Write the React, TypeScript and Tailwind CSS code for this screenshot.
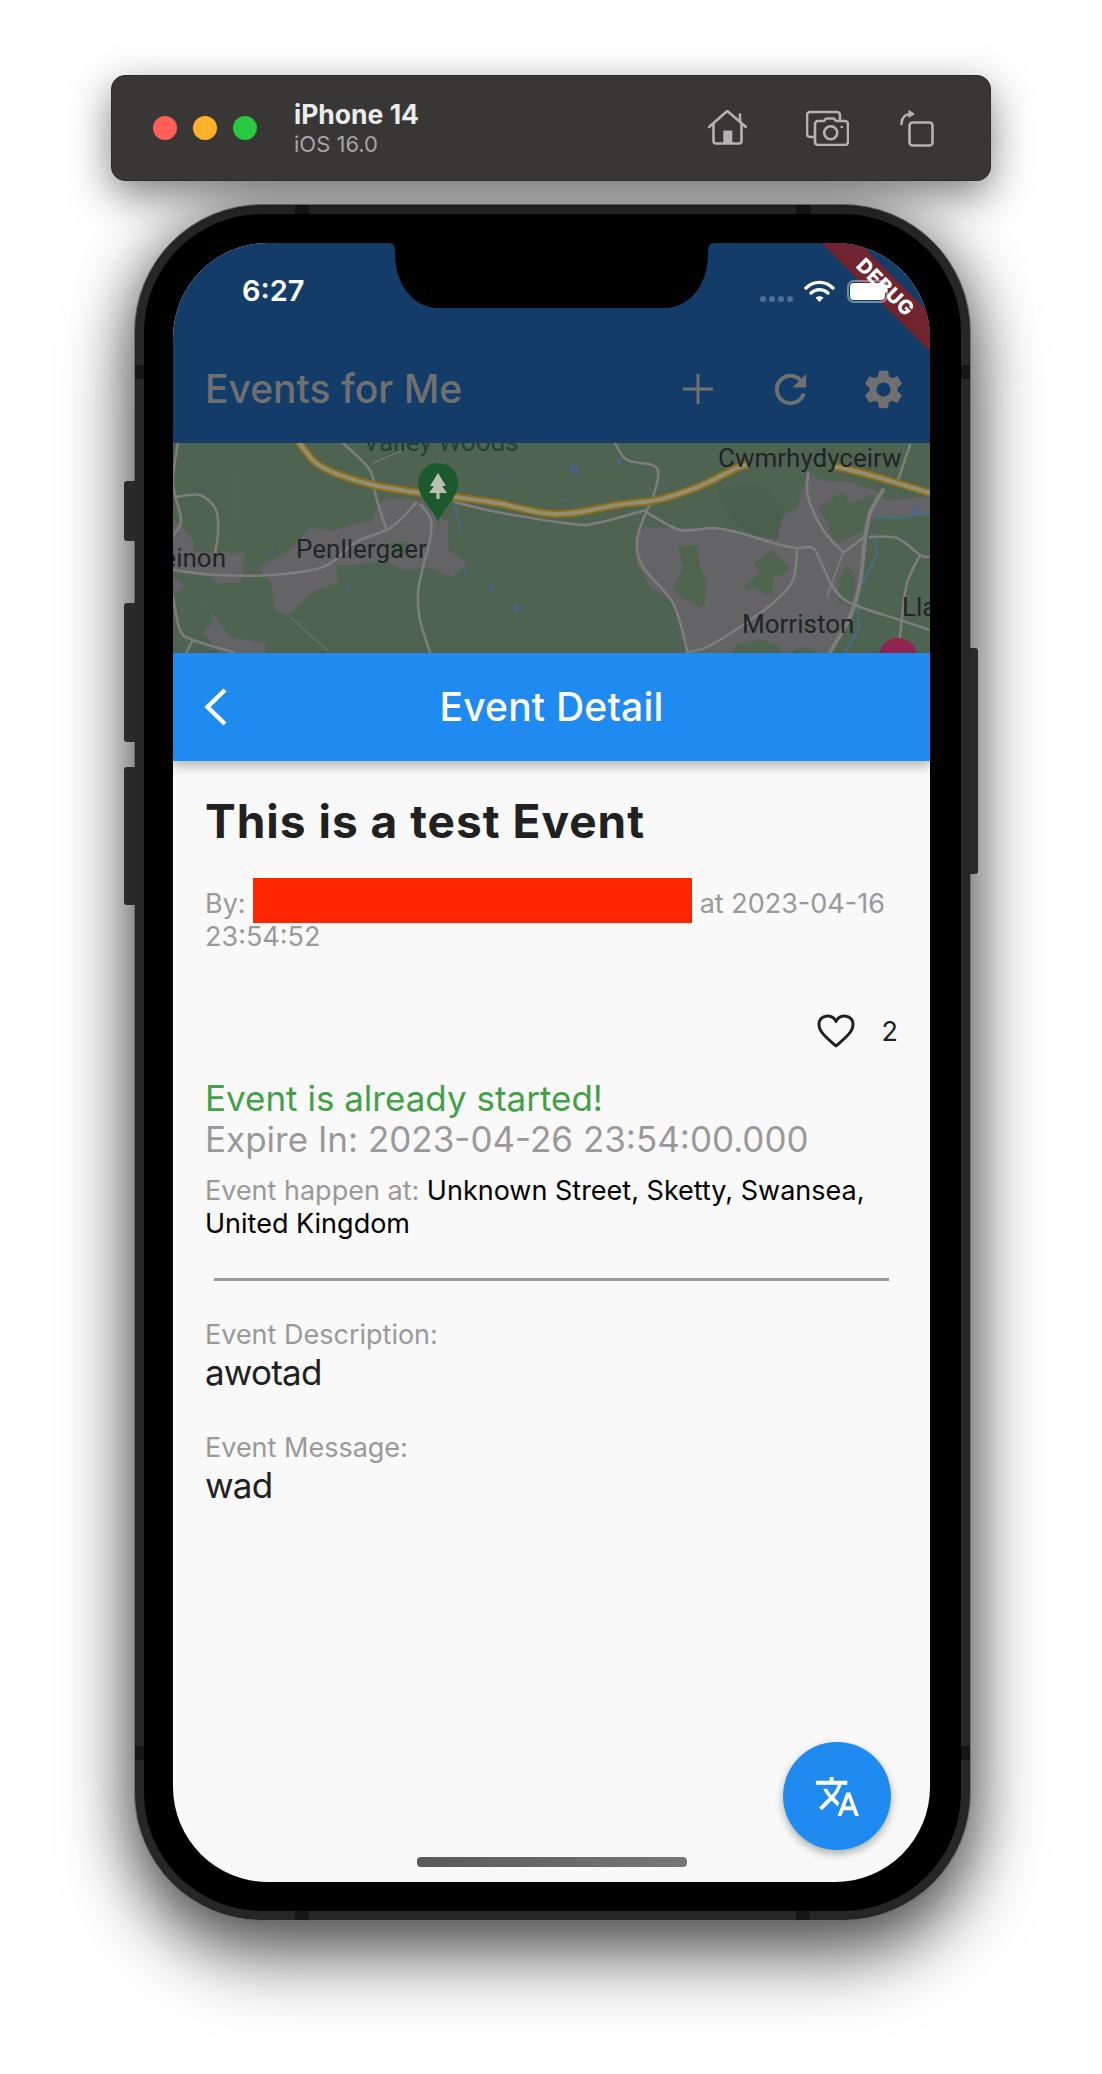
import { MdRefresh, MdSettings, MdTranslate } from "react-icons/md";

type Pt = [number, number];

// catmull-rom through the points, so map roads don't look like polylines
function smooth(pts: Pt[]) {
  let d = `M${pts[0][0]} ${pts[0][1]}`;
  for (let i = 0; i < pts.length - 1; i++) {
    const p0 = pts[Math.max(i - 1, 0)];
    const p1 = pts[i];
    const p2 = pts[i + 1];
    const p3 = pts[Math.min(i + 2, pts.length - 1)];
    const c1x = p1[0] + (p2[0] - p0[0]) / 6;
    const c1y = p1[1] + (p2[1] - p0[1]) / 6;
    const c2x = p2[0] - (p3[0] - p1[0]) / 6;
    const c2y = p2[1] - (p3[1] - p1[1]) / 6;
    d += `C${c1x} ${c1y} ${c2x} ${c2y} ${p2[0]} ${p2[1]}`;
  }
  return d;
}

const roads: Pt[][] = [
  [[170, 0], [197, 27], [203, 54], [213, 85]],
  [[0, 127], [43, 132], [97, 132], [150, 124], [183, 99], [217, 85], [243, 60]],
  [[248, 62], [258, 77], [257, 97], [250, 124], [245, 150], [247, 177], [257, 209]],
  [[3, 54], [27, 52], [43, 67], [45, 90], [42, 110]],
  [[5, 0], [0, 40], [8, 77], [0, 93]],
  [[0, 154], [7, 187], [20, 197], [60, 209]],
  [[20, 197], [13, 210]],
  [[282, 59], [324, 69], [400, 81], [424, 80], [474, 67]],
  [[442, 0], [454, 17], [484, 25], [480, 54], [475, 65]],
  [[474, 67], [464, 97], [470, 124], [500, 160], [514, 207]],
  [[473, 69], [507, 87], [540, 85], [567, 90], [600, 100], [624, 105], [640, 105], [650, 124], [660, 144], [677, 160], [727, 177], [757, 187]],
  [[624, 107], [620, 137], [600, 160], [567, 184], [534, 204], [514, 209]],
  [[635, 30], [635, 54], [650, 87], [670, 109]],
  [[670, 110], [690, 95]],
  [[697, 94], [724, 95], [747, 112], [757, 114]],
  [[747, 112], [734, 140], [729, 174], [727, 194]],
  [[724, 40], [737, 2]],
];

// the motorway drops out behind the Cwmrhydyceirw label
const motorwayWest: Pt[] = [
  [125, -2], [143, 20], [167, 32], [200, 42], [247, 50], [282, 54], [324, 60], [370, 70], [400, 70],
  [444, 62], [484, 57], [517, 47], [534, 40], [564, 25], [574, 22],
];
const motorwayEast: Pt[] = [[662, 24], [670, 25], [707, 35], [757, 50]];

function HomeIcon() {
  return (
    <svg width="39" height="36" viewBox="0 0 39 36" fill="none" stroke="#b3b3b3" strokeWidth="2.6" strokeLinecap="round" strokeLinejoin="round">
      <path d="M1 17 19.3 1 38 17" />
      <path d="M32 4.5V12" />
      <path d="M5.5 14V31a2.5 2.5 0 0 0 2.5 2.5H31a2.5 2.5 0 0 0 2.5-2.5V14" />
      <rect x="15.3" y="20.5" width="9" height="13" fill="#b3b3b3" stroke="none" />
    </svg>
  );
}

function CameraIcon() {
  return (
    <svg width="43" height="36" viewBox="0 0 43 36" fill="none" stroke="#b3b3b3" strokeWidth="2.6" strokeLinecap="round" strokeLinejoin="round">
      <path d="M8.5 27H4a3 3 0 0 1-3-3V5a3 3 0 0 1 3-3h27a3 3 0 0 1 3 3v4" />
      <path d="M12 11h6l2-2.5h8l2 2.5h9a3 3 0 0 1 3 3v18a3 3 0 0 1-3 3H12a3 3 0 0 1-3-3V14a3 3 0 0 1 3-3Z" />
      <circle cx="24.7" cy="22.7" r="6.5" />
      <circle cx="35.7" cy="17" r="1.3" fill="#b3b3b3" stroke="none" />
    </svg>
  );
}

function RotateIcon() {
  return (
    <svg width="34" height="38" viewBox="0 0 34 38" fill="none" stroke="#b3b3b3" strokeWidth="2.6" strokeLinecap="round" strokeLinejoin="round">
      <rect x="9.5" y="13.5" width="23" height="23" rx="3" />
      <path d="M1.5 15C1.5 9 5 5.5 10 5" />
      <path d="M8.5 0.8 15 5 8.5 9Z" fill="#b3b3b3" stroke="none" />
    </svg>
  );
}

function MapPicture() {
  return (
    <svg className="block h-[210px] w-[757px] font-['Roboto',sans-serif]" viewBox="0 0 757 210" fill="none">
      <rect width="757" height="210" fill="#4f6351" />

      {/* built up areas */}
      <g fill="#646466">
        <path d="M85 125 115 109 137 85 160 88 182 80 198 79 205 62 215 55 245 57 260 62 270 77 275 77 275 107 294 120 279 134 257 125 230 127 212 118 182 122 163 122 165 140 143 147 127 160 115 173 102 167 98 139Z" />
        <path d="M0 77 10 84 22 100 20 109 72 110 68 140 43 140 33 129 0 127Z" />
        <path d="M0 134 12 143 0 152Z" />
        <path d="M38 170 50 184 57 194 92 200 92 210 47 210 30 189 40 180Z" />
        <path d="M464 90 472 84 490 85 507 85 540 85 567 89 604 97 607 74 624 65 635 30 650 38 677 39 700 47 707 54 714 57 757 54 757 72 700 75 692 97 687 140 677 174 657 210 514 210 499 157 477 144 464 120Z" />
      </g>

      {/* parks on top of the built up areas */}
      <g fill="#4f654f">
        <path d="M505 104 517 102 525 104 527 125 534 137 532 159 527 164 507 154 500 144 510 125Z" />
        <path d="M599 107 617 125 612 130 600 134 600 150 592 152 582 144 572 147 570 144 587 130 580 120Z" />
        <path d="M645 65 670 49 677 60 702 52 692 87 667 100 660 97 655 80Z" />
        <path d="M665 140 674 122 682 130 682 150 677 164 665 160Z" />
        <path d="M560 210 563 202 590 197 607 203 608 210Z" />
        <path d="M617 210 625 204 640 206 642 210Z" />
        <path d="M215 100 235 98 238 108 222 112Z" />
      </g>
      <path d="M544 47 575 40 590 42 612 65 604 97 574 90 549 64Z" fill="#4a5f4c" />

      {/* water */}
      <g stroke="#4a6c8c" fill="none">
        <path d="M702 74 726 75 757 70" strokeWidth="2" />
        <path d="M700 90 705 110 692 135 684 150 686 185 672 210" strokeWidth="2" />
        <path d="M282 62 288 90" strokeWidth="3" opacity="0.6" />
        <path d="M74 10 64 30 62 75 50 110 28 170" strokeWidth="1" opacity="0.4" />
        <path d="M328 32 370 45 392 58 415 52 432 40" strokeWidth="1" opacity="0.4" />
      </g>
      <g fill="#4a6296" opacity="0.7">
        <path d="M396 22 406 23 406 30 398 31Z" />
        <path d="M444 16 448 15 449 22 444 22Z" />
        <path d="M290 126 296 125 291 135Z" />
        <path d="M315 142 322 142 316 150Z" />
        <path d="M341 162 350 162 344 170 340 170Z" />
        <path d="M97 105 100 105 100 110 97 110Z" />
        <path d="M174 143 177 143 177 148 174 148Z" />
        <path d="M740 64 748 63 745 70 739 70Z" />
      </g>

      {/* ordinary roads */}
      <g stroke="#7d7d7b" strokeWidth="2.6" strokeLinecap="round" fill="none">
        {roads.map((road, i) => (
          <path key={i} d={smooth(road)} />
        ))}
        <path d="M670 110 654 154" strokeWidth="1.6" />
        <path d={smooth([[710, 47], [697, 70], [692, 97], [687, 140], [677, 174], [657, 209]])} strokeWidth="4" />
        <path d="M117 174 155 208" strokeWidth="1" />
        <path d="M200 20 228 8" strokeWidth="1" />
      </g>

      {/* motorway */}
      <g fill="none">
        <path d={smooth(motorwayWest)} stroke="#8a6f1e" strokeWidth="8" />
        <path d={smooth(motorwayWest)} stroke="#948e70" strokeWidth="4" />
        <path d={smooth(motorwayEast)} stroke="#8a6f1e" strokeWidth="8" />
        <path d={smooth(motorwayEast)} stroke="#948e70" strokeWidth="4" />
      </g>

      {/* place names */}
      <g fill="#202427" fontSize="26">
        <text x="123" y="115">Penllergaer</text>
        <text x="53" y="124" textAnchor="end">einon</text>
        <text x="545" y="24">Cwmrhydyceirw</text>
        <text x="569" y="190">Morriston</text>
        <text x="729" y="173">Lla</text>
        <text x="190" y="8" fill="#1e4430">Valley Woods</text>
      </g>

      {/* park pin */}
      <path d="M265 79C262 68 245 56 245 40a20 20 0 0 1 40 0C285 56 268 68 265 79Z" fill="#1c5a2e" />
      <path d="M265 30 257 43 261 43 256 50 263.5 50 263.5 56 266.5 56 266.5 50 274 50 269 43 273 43Z" fill="#b7c2b4" />

      {/* second pin, cut off by the panel */}
      <circle cx="725" cy="214" r="19" fill="#8f2550" />
    </svg>
  );
}

export default function App() {
  return (
    <div className="h-[2074px] w-[1102px] overflow-hidden bg-white pt-[75px] font-['Inter',sans-serif]">
      {/* simulator toolbar */}
      <div className="relative z-10 ml-[111px] flex h-[106px] w-[880px] items-center rounded-[14px] border border-[#2b2a29] bg-[#383736] shadow-[0_14px_40px_rgba(0,0,0,0.5)]">
        <div className="ml-[41px] flex gap-[16px]">
          <span className="h-[24px] w-[24px] rounded-full bg-[#ff5f57]" />
          <span className="h-[24px] w-[24px] rounded-full bg-[#fdb22a]" />
          <span className="h-[24px] w-[24px] rounded-full bg-[#28c840]" />
        </div>
        <div className="ml-[37px] flex flex-col">
          <span className="text-[26.5px] leading-[30px] font-bold text-[#ececec]">iPhone 14</span>
          <span className="mt-[1px] text-[22px] leading-[28px] text-[#a5a5a5]">iOS 16.0</span>
        </div>
        <div className="ml-auto mr-[56px] flex items-center">
          <HomeIcon />
          <div className="ml-[59px]">
            <CameraIcon />
          </div>
          <div className="ml-[51px]">
            <RotateIcon />
          </div>
        </div>
      </div>

      {/* phone body */}
      <div className="relative ml-[134px] mt-[23px] h-[1717px] w-[837px] rounded-[128px] border border-[#6e6e6e] bg-[#262626] p-[9px] shadow-[0_38px_70px_rgba(0,0,0,0.55),0_0_60px_rgba(0,0,0,0.42)]">
        <span className="absolute left-[-11px] top-[276px] h-[60px] w-[11px] rounded-l-[3px] bg-[#2a2a2a]" />
        <span className="absolute left-[-11px] top-[398px] h-[139px] w-[11px] rounded-l-[3px] bg-[#2a2a2a]" />
        <span className="absolute left-[-11px] top-[562px] h-[138px] w-[11px] rounded-l-[3px] bg-[#2a2a2a]" />
        <span className="absolute right-[-8px] top-[443px] h-[226px] w-[8px] rounded-r-[3px] bg-[#2a2a2a]" />

        {/* antenna bands */}
        <span className="absolute left-[160px] top-0 h-[10px] w-[14px] bg-[#161616]" />
        <span className="absolute right-[160px] top-0 h-[10px] w-[14px] bg-[#161616]" />
        <span className="absolute bottom-0 left-[160px] h-[10px] w-[14px] bg-[#161616]" />
        <span className="absolute bottom-0 right-[160px] h-[10px] w-[14px] bg-[#161616]" />
        <span className="absolute left-0 top-[160px] h-[14px] w-[10px] bg-[#161616]" />
        <span className="absolute right-0 top-[160px] h-[14px] w-[10px] bg-[#161616]" />
        <span className="absolute bottom-[160px] left-0 h-[14px] w-[10px] bg-[#161616]" />
        <span className="absolute bottom-[160px] right-0 h-[14px] w-[10px] bg-[#161616]" />

        <div className="relative h-full w-full rounded-[118px] bg-black pb-[29px] pl-[29px] pr-[30px] pt-[29px]">
          {/* screen */}
          <div className="relative flex h-[1639px] w-[757px] flex-col overflow-hidden rounded-[95px] bg-[#f9f9f9]">
            <div className="h-[200px] bg-[#133c69]">
              <div className="relative z-20 flex h-[92px] items-start pl-[69px] pr-[42px] pt-[32px]">
                <span className="text-[29px] leading-[32px] font-semibold text-white">6:27</span>
                <div className="ml-auto flex h-[32px] items-center">
                  <div className="mt-[16px] flex gap-[3px]">
                    <span className="h-[6px] w-[6px] rounded-full bg-[#4f7092]" />
                    <span className="h-[6px] w-[6px] rounded-full bg-[#4f7092]" />
                    <span className="h-[6px] w-[6px] rounded-full bg-[#4f7092]" />
                    <span className="h-[6px] w-[6px] rounded-full bg-[#4f7092]" />
                  </div>
                  <svg className="ml-[11px]" width="31" height="23" viewBox="0 0 31 23" fill="none" stroke="white" strokeWidth="3.4" strokeLinecap="round">
                    <path d="M2 8C9.5 0.5 21.5 0.5 29 8" />
                    <path d="M7 13C11.8 8.5 19.2 8.5 24 13" />
                    <path d="M15.5 22 11.5 17.8C13.8 15.8 17.2 15.8 19.5 17.8Z" fill="white" stroke="none" />
                  </svg>
                  <div className="ml-[12px] flex h-[23px] w-[41px] items-center rounded-[7px] border-2 border-white/40 p-[1px]">
                    <span className="h-full w-full rounded-[4px] bg-white" />
                  </div>
                </div>
              </div>

              <div className="flex h-[108px] items-center pl-[32px]">
                <span className="text-[39px] leading-[46px] font-medium text-[#707070]">Events for Me</span>
                <div className="ml-auto flex items-center text-[#707070]">
                  <div className="flex w-[93px] justify-center">
                    <svg width="30" height="30" viewBox="0 0 30 30" stroke="#707070" strokeWidth="3">
                      <path d="M15 0V30M0 15H30" />
                    </svg>
                  </div>
                  <div className="flex w-[93px] justify-center">
                    <MdRefresh size={47} />
                  </div>
                  <div className="flex w-[93px] justify-center">
                    <MdSettings size={47} />
                  </div>
                </div>
              </div>
            </div>

            <MapPicture />

            <div className="relative z-[5] grid h-[108px] grid-cols-[1fr_auto_1fr] items-center bg-[#1f8af0] shadow-[0_5px_10px_rgba(0,0,0,0.28)]">
              <svg className="ml-[31px]" width="23" height="38" viewBox="0 0 23 38" fill="none" stroke="white" strokeWidth="4.4">
                <path d="M21 2 3.5 19 21 36" />
              </svg>
              <span className="text-[39px] leading-[44px] font-medium tracking-[0.2px] text-white">Event Detail</span>
              <span />
            </div>

            <div className="flex-1 px-[32px] pt-[32px]">
              <h1 className="text-[46px] leading-[56px] font-bold tracking-[1px] text-[#212121]">This is a test Event</h1>
              <p className="mt-[38px] text-[27px] leading-[33px] text-[#999999]">
                By:
                <span className="-my-[10px] ml-[7px] mr-[8px] inline-block h-[45px] w-[439px] bg-[#ff2600] align-baseline" />
                at 2023-04-16 23:54:52
              </p>
              <div className="mt-[58px] flex h-[40px] items-center justify-end gap-[27px]">
                <svg width="38" height="36" viewBox="0 0 38 34" fill="none" stroke="#212121" strokeWidth="3" strokeLinejoin="round">
                  <path d="M19 32C10 24 2 18 2 10.5 2 5 6 2 10.5 2 14 2 17.5 4 19 7.5 20.5 4 24 2 27.5 2 32 2 36 5 36 10.5 36 18 28 24 19 32Z" />
                </svg>
                <span className="text-[27px] leading-[33px] text-[#212121]">2</span>
              </div>
              <p className="mt-[27px] text-[35px] leading-[41px] text-[#43a047]">Event is already started!</p>
              <p className="text-[35px] leading-[41px] text-[#999999]">Expire In: 2023-04-26 23:54:00.000</p>
              <p className="mt-[14px] text-[27px] leading-[33px] text-black">
                <span className="text-[#999999]">Event happen at: </span>
                Unknown Street, Sketty, Swansea, United Kingdom
              </p>
              <div className="mx-[9px] mt-[38px] h-[3px] bg-[#999999]" />
              <p className="mt-[37px] text-[27px] leading-[33px] text-[#999999]">Event Description:</p>
              <p className="mt-[1px] text-[35px] leading-[41px] tracking-[-0.8px] text-[#212121]">awotad</p>
              <p className="mt-[38px] text-[27px] leading-[33px] text-[#999999]">Event Message:</p>
              <p className="mt-[1px] text-[35px] leading-[41px] tracking-[-0.8px] text-[#212121]">wad</p>
            </div>

            {/* things that sit over the screen */}
            <div className="absolute left-[612px] top-[31px] z-10 flex h-[27px] w-[200px] rotate-45 items-center justify-center bg-[#6f2430] text-[20px] leading-[27px] font-extrabold tracking-[0.5px] text-white">
              DEBUG
            </div>
            <svg className="absolute left-[214px] top-0 z-30" width="329" height="65" viewBox="0 0 333 65" preserveAspectRatio="none" fill="black">
              <path d="M0 0H333C325 0 325 4 325 10 325 40 308 65 280 65H53C25 65 8 40 8 10 8 4 8 0 0 0Z" />
            </svg>
            <div className="absolute left-[610px] top-[1499px] flex h-[108px] w-[108px] items-center justify-center rounded-full bg-[#1f8af0] text-white shadow-[0_4px_8px_rgba(0,0,0,0.3)]">
              <MdTranslate size={47} />
            </div>
            <div className="absolute left-[244px] top-[1614px] h-[10px] w-[270px] rounded-[4px] bg-gradient-to-r from-[#5a5a5a] to-[#777777]" />
          </div>
        </div>
      </div>
    </div>
  );
}
